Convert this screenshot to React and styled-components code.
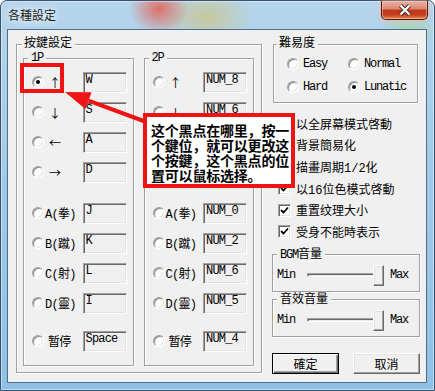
import React from "react";
import styled, { createGlobalStyle, css } from "styled-components";

const RED = "#ee1414";
const FONT = `"Liberation Mono", "Noto Sans CJK SC", monospace`;
const CJK = `"Noto Sans CJK SC", "Liberation Sans", sans-serif`;

const GlobalStyle = createGlobalStyle`
  html, body { margin: 0; padding: 0; background: #fff; }
  body { overflow: hidden; }
`;

const Window = styled.div`
  position: relative;
  width: 435px;
  height: 391px;
  box-sizing: border-box;
  border: 1px solid #34526f;
  border-radius: 7px 7px 0 0;
  background:
    radial-gradient(ellipse 30px 26px at 158px 8px, rgba(222, 108, 96, 0.95), rgba(222, 108, 96, 0)),
    radial-gradient(ellipse 48px 30px at 205px 16px, rgba(204, 196, 136, 0.8), rgba(204, 196, 136, 0)),
    radial-gradient(ellipse 30px 18px at 408px 30px, rgba(160, 214, 150, 0.7), rgba(160, 214, 150, 0)),
    linear-gradient(180deg, #b5d5ec 0%, #a3cbe8 40%, #8fc1e5 100%);
  box-shadow: inset 0 0 0 1px rgba(255, 255, 255, 0.45);
  display: flex;
  flex-direction: column;
  font-family: ${FONT};
  font-size: 12px;
  color: #000;
`;

const TitleBar = styled.div`
  height: 28px;
  flex: none;
  display: flex;
  justify-content: space-between;
  align-items: flex-start;
  padding: 0 6px 0 7px;
`;

const Title = styled.span`
  margin-top: 6px;
  font-family: ${CJK};
  font-size: 12px;
  line-height: 16px;
  color: #1b1b1b;
  text-shadow: 0 0 6px #fff, 0 0 10px rgba(255, 255, 255, 0.9);
`;

const CloseButton = styled.div`
  width: 47px;
  height: 19px;
  box-sizing: border-box;
  border: 1px solid #5a150c;
  border-top: none;
  border-radius: 0 0 5px 5px;
  background: linear-gradient(180deg, #eab0a2 0%, #dc8a76 42%, #c0371b 52%, #c43d1d 75%, #e48c4f 100%);
  box-shadow: inset 0 0 0 1px rgba(255, 220, 200, 0.45), 0 0 6px rgba(255, 180, 160, 0.8);
  display: flex;
  align-items: center;
  justify-content: center;
`;

const Client = styled.div`
  flex: 1;
  margin: 0 7px 7px 6px;
  border: 1px solid #4f6c88;
  background: #f0f0f0;
  display: flex;
  gap: 10px;
  padding: 6px 6px 9px 8px;
  min-height: 0;
`;

const Group = styled.fieldset`
  margin: 0;
  min-width: 0;
  padding: 0;
  box-sizing: border-box;
  border: 1px solid #a0a0a0;
  box-shadow: inset 1px 1px 0 #fff, 1px 1px 0 #fff;
`;

const Legend = styled.legend`
  margin-left: ${(p) => p.$indent}px;
  padding: 0 3px 0 ${(p) => p.$pad ?? 2}px;
  line-height: ${(p) => p.$lh ?? 16}px;
  font-size: 12px;
  background: #f0f0f0;
`;

const Latin = styled.span`
  letter-spacing: -1.2px;
`;

/* ---- key settings ---- */

const KeyGroup = styled(Group)`
  flex: 1;
`;

const PlayerRow = styled.div`
  display: flex;
  gap: 10px;
  padding: 0 7px 6px 6px;
`;

const PlayerBox = styled(Group)`
  flex: 1;
`;

const KeyList = styled.div`
  padding: 3px 6px 9px 8px;
`;

const KeyRow = styled.div`
  display: grid;
  grid-template-columns: 12px 1fr 44px;
  align-items: center;
  height: 30px;
  margin-top: ${(p) => p.$gap || 0}px;
`;

const KeyLabel = styled.span`
  padding-left: ${(p) => p.$indent}px;
  white-space: nowrap;
  letter-spacing: -0.7px;
  ${(p) =>
    p.$arrow &&
    css`
      font-family: ${CJK};
      letter-spacing: 0;
    `}
`;

const KeyField = styled.div`
  height: 21px;
  box-sizing: border-box;
  border: 1px solid;
  border-color: #a0a0a0 #fff #fff #a0a0a0;
  box-shadow: inset 1px 1px 0 #696969, inset -1px -1px 0 #e3e3e3;
  background: #f0f0f0;
  padding: 1px 0 0 2px;
  font-size: 12px;
  line-height: 13px;
  letter-spacing: -0.8px;
  white-space: nowrap;
  overflow: hidden;
`;

const Radio = styled.span`
  width: 12px;
  height: 12px;
  box-sizing: border-box;
  border-radius: 50%;
  border: 1px solid;
  border-color: #a0a0a0 #fff #fff #a0a0a0;
  box-shadow: inset 1px 1px 0 #8a8a8a, inset -1px -1px 0 #e3e3e3;
  background: #fff;
  display: flex;
  align-items: center;
  justify-content: center;

  &::after {
    content: "";
    width: 4px;
    height: 4px;
    border-radius: 50%;
    background: #000;
    display: ${(p) => (p.$on ? "block" : "none")};
  }
`;

/* ---- right column ---- */

const Side = styled.div`
  width: 148px;
  flex: none;
  display: flex;
  flex-direction: column;
`;

const DiffGroup = styled(Group)`
  margin: 0 2px 0 1px;
`;

const DiffGrid = styled.div`
  display: grid;
  grid-template-columns: 61px 1fr;
  grid-auto-rows: 23px;
  padding: 0 0 4px 13px;
`;

const Option = styled.div`
  display: flex;
  align-items: center;
  gap: 4px;
`;

const OptionText = styled.span`
  letter-spacing: -1.2px;
`;

const CheckList = styled.div`
  margin-top: 10px;
  padding-left: 6px;
  display: flex;
  flex-direction: column;
`;

const CheckItem = styled.div`
  height: 21.6px;
  display: flex;
  align-items: center;
  gap: 5px;
  white-space: nowrap;
`;

const Box = styled.span`
  width: 13px;
  height: 13px;
  flex: none;
  box-sizing: border-box;
  border: 1px solid;
  border-color: #a0a0a0 #fff #fff #a0a0a0;
  box-shadow: inset 1px 1px 0 #696969, inset -1px -1px 0 #e3e3e3;
  background: #fff;
  display: flex;
  align-items: center;
  justify-content: center;
`;

const VolumeGroup = styled(Group)`
  margin-top: ${(p) => p.$top || 0}px;
`;

const SliderRow = styled.div`
  display: flex;
  align-items: center;
  height: 21px;
  padding: 2px 0 5px 4px;
`;

const SliderLabel = styled.span`
  letter-spacing: -1.2px;
  width: 18px;
`;

const Track = styled.div`
  position: relative;
  width: 77px;
  height: 21px;
  margin: 0 6px 0 12px;

  &::before {
    content: "";
    position: absolute;
    left: 0;
    right: 2px;
    top: 8px;
    height: 4px;
    box-sizing: border-box;
    border: 1px solid;
    border-color: #a0a0a0 #fff #fff #a0a0a0;
    box-shadow: inset 1px 1px 0 #696969;
    background: #e8e8e8;
  }
`;

const Thumb = styled.div`
  position: absolute;
  top: 0;
  width: 11px;
  height: 21px;
  box-sizing: border-box;
  background: #f0f0f0;
  border: 1px solid;
  border-color: #fff #696969 #696969 #fff;
  box-shadow: inset -1px -1px 0 #a0a0a0, inset 1px 1px 0 #e3e3e3;
`;

const ButtonRow = styled.div`
  margin-top: 16px;
  display: flex;
  justify-content: space-between;
`;

const Button = styled.button`
  width: 67px;
  height: 21px;
  box-sizing: border-box;
  padding: 0;
  font-family: ${CJK};
  font-size: 12px;
  color: #000;
  background: #f0f0f0;
  border: 1px solid;
  border-color: #fff #696969 #696969 #fff;
  box-shadow: inset -1px -1px 0 #a0a0a0, inset 1px 1px 0 #e3e3e3;

  ${(p) =>
    p.$default &&
    css`
      border-color: #000;
      box-shadow: inset 1px 1px 0 #fff, inset -1px -1px 0 #696969, inset -2px -2px 0 #a0a0a0;
    `}
`;

/* ---- annotation overlay ---- */

const Annotations = styled.div`
  position: absolute;
  left: -1px;
  top: -1px;
  width: 435px;
  height: 391px;
  pointer-events: none;
`;

const Highlight = styled.div`
  position: absolute;
  left: 20px;
  top: 63px;
  width: 44px;
  height: 30px;
  box-sizing: border-box;
  border: 4px solid ${RED};
`;

const ArrowSvg = styled.svg`
  position: absolute;
  left: 0;
  top: 0;
`;

const Callout = styled.div`
  position: absolute;
  left: 143px;
  top: 113px;
  width: 152px;
  height: 75px;
  box-sizing: border-box;
  border: 4px solid ${RED};
  background: #fff;
  padding: 6px 0 0 4px;
  font-family: ${CJK};
  font-weight: 700;
  font-size: 14px;
  line-height: 15px;
  letter-spacing: -0.2px;
  white-space: nowrap;
  color: #000;
`;

const p1 = [
  { label: "↑", key: "W", arrow: true, on: true },
  { label: "↓", key: "S", arrow: true },
  { label: "←", key: "A", arrow: true },
  { label: "→", key: "D", arrow: true },
  { label: "A(拳)", key: "J", gap: 11 },
  { label: "B(蹴)", key: "K" },
  { label: "C(射)", key: "L" },
  { label: "D(靈)", key: "I" },
  { label: "暂停", key: "Space", gap: 8, indent: 4 },
];

const p2Keys = ["NUM_8", "NUM_6", "NUM_4", "NUM_6", "NUM_0", "NUM_2", "NUM_6", "NUM_5", "NUM_4"];

const checks = ["以全屏幕模式啓動", "背景簡易化", "描畫周期1/2化", "以16位色模式啓動", "重置纹理大小", "受身不能時表示"];

const KeyPanel = ({ name, keys, first }) => (
  <PlayerBox>
    <Legend $indent={4} $pad={3} $lh={12}>
      <Latin>{name}</Latin>
    </Legend>
    <KeyList>
      {p1.map((row, i) => (
        <KeyRow key={i} $gap={row.gap}>
          <Radio $on={first && row.on} />
          <KeyLabel $arrow={row.arrow} $indent={row.arrow ? 5 : row.indent || 1}>
            {row.label}
          </KeyLabel>
          <KeyField>{keys[i]}</KeyField>
        </KeyRow>
      ))}
    </KeyList>
  </PlayerBox>
);

const Check = () => (
  <svg width="9" height="9" viewBox="0 0 9 9">
    <path d="M1 4 L3.5 6.5 L8 1.5" fill="none" stroke="#000" strokeWidth="1.8" />
  </svg>
);

const Volume = ({ title, top }) => (
  <VolumeGroup $top={top}>
    <Legend $indent={4} $pad={3}>
      {title}
    </Legend>
    <SliderRow>
      <SliderLabel>Min</SliderLabel>
      <Track>
        <Thumb style={{ left: 66 }} />
      </Track>
      <SliderLabel>Max</SliderLabel>
    </SliderRow>
  </VolumeGroup>
);

// arrow from the callout back to the highlighted radio
const tip = [65, 92];
const from = [145, 121.5];
const len = Math.hypot(from[0] - tip[0], from[1] - tip[1]);
const ux = (tip[0] - from[0]) / len;
const uy = (tip[1] - from[1]) / len;
const base = [tip[0] - ux * 25, tip[1] - uy * 25];
const head = [
  tip,
  [base[0] - uy * 9, base[1] + ux * 9],
  [base[0] + uy * 9, base[1] - ux * 9],
]
  .map((p) => p.join(","))
  .join(" ");

export default function App() {
  return (
    <>
      <GlobalStyle />
      <Window>
        <TitleBar>
          <Title>各種設定</Title>
          <CloseButton>
            <svg width="14" height="12" viewBox="0 0 14 12">
              <path d="M2.5 1.5 L11.5 10.5 M11.5 1.5 L2.5 10.5" stroke="#4a2a24" strokeWidth="4.2" />
              <path d="M2.5 1.5 L11.5 10.5 M11.5 1.5 L2.5 10.5" stroke="#fff" strokeWidth="2.2" />
            </svg>
          </CloseButton>
        </TitleBar>

        <Client>
          <KeyGroup>
            <Legend $indent={5}>按鍵設定</Legend>
            <PlayerRow>
              <KeyPanel name="1P" first keys={p1.map((r) => r.key)} />
              <KeyPanel name="2P" keys={p2Keys} />
            </PlayerRow>
          </KeyGroup>

          <Side>
            <DiffGroup>
              <Legend $indent={3}>難易度</Legend>
              <DiffGrid>
                <Option>
                  <Radio />
                  <OptionText>Easy</OptionText>
                </Option>
                <Option>
                  <Radio />
                  <OptionText>Normal</OptionText>
                </Option>
                <Option>
                  <Radio />
                  <OptionText>Hard</OptionText>
                </Option>
                <Option>
                  <Radio $on />
                  <OptionText>Lunatic</OptionText>
                </Option>
              </DiffGrid>
            </DiffGroup>

            <CheckList>
              {checks.map((label) => (
                <CheckItem key={label}>
                  <Box>
                    <Check />
                  </Box>
                  <span>{label}</span>
                </CheckItem>
              ))}
            </CheckList>

            <Volume
              top={4}
              title={
                <>
                  <Latin>BGM</Latin>音量
                </>
              }
            />
            <Volume title="音效音量" />

            <ButtonRow>
              <Button $default>確定</Button>
              <Button>取消</Button>
            </ButtonRow>
          </Side>
        </Client>

        <Annotations>
          <Highlight />
          <ArrowSvg width="435" height="391">
            <line x1={from[0]} y1={from[1]} x2={base[0]} y2={base[1]} stroke={RED} strokeWidth="4" />
            <polygon points={head} fill={RED} />
          </ArrowSvg>
          <Callout>
            这个黑点在哪里，按一
            <br />
            个鍵位，就可以更改这
            <br />
            个按鍵，这个黑点的位
            <br />
            置可以鼠标选择。
          </Callout>
        </Annotations>
      </Window>
    </>
  );
}
